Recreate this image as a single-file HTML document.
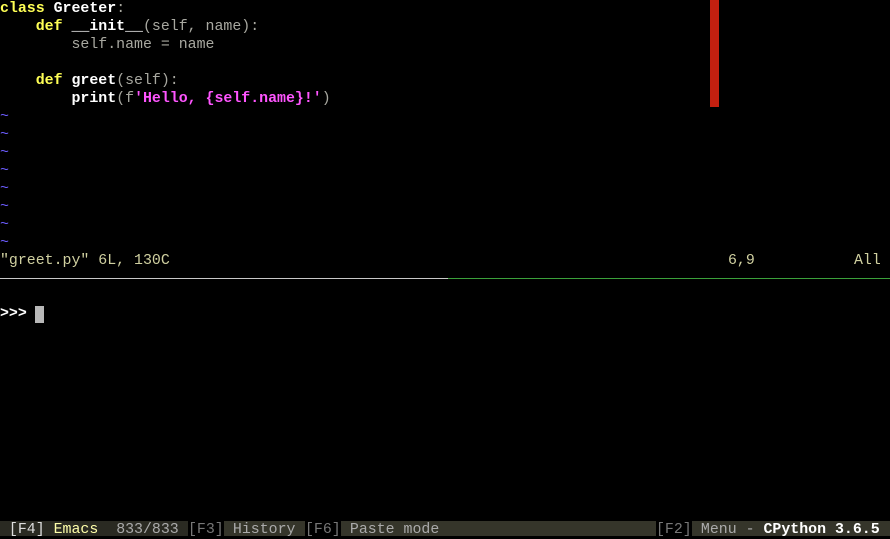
<!DOCTYPE html>
<html><head><style>
html,body{margin:0;padding:0;background:#000;width:890px;height:536px;overflow:hidden}
.t{position:absolute;left:0;font-family:"Liberation Mono",monospace;font-size:14.9px;line-height:18px;white-space:pre;color:#b0b0a0}
.k{color:#ffff55;font-weight:bold}
.w{color:#fff;font-weight:bold}
.g{color:#a8a8a0}
.m{color:#ff55ff;font-weight:bold}
.tl{color:#6b5cff}
.st{color:#d0d0a0}
#red{position:absolute;left:710px;top:0;width:9px;height:107px;background:#c42010}
#hl{position:absolute;top:278px;left:0;width:448px;height:1px;background:#c8c8c8}
#hr{position:absolute;top:278px;left:448px;width:442px;height:1px;background:#3aa03a}
#cur{position:absolute;left:35px;top:306px;width:9px;height:17px;background:#b8b8b8}
#bar{position:absolute;left:0;top:521px;width:890px;height:15px;background:#35352a}
.b{position:absolute;top:521px;font-family:"Liberation Mono",monospace;font-size:14.9px;line-height:18px;white-space:pre}
.k2{background:#000;color:#777;height:15px;overflow:hidden}
</style></head><body>
<div id="red"></div>
<div class="t" style="top:0"><span class="k">class</span> <span class="w">Greeter</span><span class="g">:</span>
    <span class="k">def</span> <span class="w">__init__</span><span class="g">(self, name):</span>
        <span class="g">self.name = name</span>

    <span class="k">def</span> <span class="w">greet</span><span class="g">(self):</span>
        <span class="w">print</span><span class="g">(f</span><span class="m">'Hello, {self.name}!'</span><span class="g">)</span>
<span class="tl">~
~
~
~
~
~
~
~</span>
<span class="st">"greet.py" 6L, 130C</span></div>
<div class="t st" style="top:252px;left:728px">6,9</div>
<div class="t st" style="top:252px;left:854px">All</div>
<div id="hl"></div><div id="hr"></div>
<div class="t" style="top:305px;color:#fff;font-weight:bold">&gt;&gt;&gt;</div>
<div id="cur"></div>
<div id="bar"></div>
<div class="b" style="left:0;background:#2a2a22;color:#ddd;height:15px;overflow:hidden">&#160;[F4] <span style="color:#ffffaa">Emacs</span>  <span style="color:#aaa">833/833 </span></div>
<div class="b k2" style="left:188px">[F3]</div>
<div class="b" style="left:224px;color:#aaa">&#160;History </div>
<div class="b k2" style="left:305px">[F6]</div>
<div class="b" style="left:341px;color:#aaa">&#160;Paste mode</div>
<div class="b k2" style="left:656px">[F2]</div>
<div class="b" style="left:692px;color:#aaa">&#160;Menu - <span style="color:#fff;font-weight:bold">CPython 3.6.5</span></div>
</body></html>
